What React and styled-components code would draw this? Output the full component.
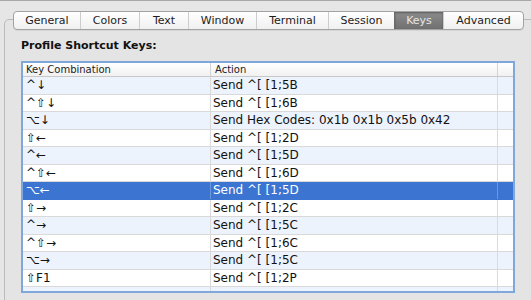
import styled, { createGlobalStyle } from "styled-components";

const GlobalStyle = createGlobalStyle`
  html, body {
    margin: 0;
    padding: 0;
  }
  body {
    background: #e6e6e6;
    font-family: "DejaVu Sans", "Liberation Sans", sans-serif;
    color: #111;
  }
`;

const Window = styled.div`
  width: 531px;
  height: 300px;
  overflow: hidden;
  box-sizing: border-box;
  background: #e6e6e6;
  border-top: 1px solid #a8a8a8;
  padding: 18px 0 0 4px;
`;

const Panel = styled.div`
  height: 320px;
  margin-right: -10px;
  border: 1px solid #bababa;
  border-radius: 5px 0 0 0;
  background: #e4e4e4;
  padding-left: 8px;
`;

const TabBar = styled.div`
  display: flex;
  width: fit-content;
  margin-top: -9px;
  border: 1px solid #a2a2a2;
  border-radius: 4px;
  overflow: hidden;
  background: linear-gradient(#ffffff, #f0f0f0);
  box-shadow: 0 1px 0 rgba(0, 0, 0, 0.06);
`;

const Tab = styled.div`
  box-sizing: border-box;
  width: ${(p) => p.$w}px;
  height: 17px;
  display: flex;
  align-items: center;
  justify-content: center;
  font-size: 11px;
  color: ${(p) => (p.$active ? "#e6e6e6" : "#1c1c1c")};
  border-left: ${(p) => (p.$first ? "none" : "1px solid #cdcdcd")};
  background: ${(p) =>
    p.$active ? "linear-gradient(#8c8c8c, #707070)" : "transparent"};
  ${(p) => p.$active && "border-left-color: #6a6a6a; box-shadow: inset 0 1px 2px rgba(0,0,0,0.35);"}
`;

const Body = styled.div`
  padding-left: 8px;
`;

const Heading = styled.div`
  margin-top: 9px;
  font-size: 11px;
  line-height: 14px;
  font-weight: bold;
  color: #111;
`;

const Table = styled.div`
  margin-top: 8px;
  width: 494px;
  height: 232px;
  box-sizing: border-box;
  border: 2px solid #7fa7db;
  background: #fff;
  overflow: hidden;
`;

const Header = styled.div`
  display: grid;
  grid-template-columns: 188px 287px 1fr;
  height: 14px;
  box-sizing: border-box;
  border-bottom: 1px solid #c8c8c8;
  background: linear-gradient(#ffffff, #f1f1f1);
  font-size: 10px;
  line-height: 13px;
  color: #222;
`;

const HeadCell = styled.div`
  padding-left: ${(p) => p.$pad}px;
  border-right: ${(p) => (p.$last ? "none" : "1px solid #d4d4d4")};
  white-space: nowrap;
`;

const Row = styled.div`
  display: grid;
  grid-template-columns: 188px 287px 1fr;
  height: 17.5px;
  box-sizing: border-box;
  border-bottom: 1px solid ${(p) => (p.$selected ? "#3b74d1" : "#d9d9d9")};
  background: ${(p) =>
    p.$selected ? "#3b74d1" : p.$odd ? "#edf3fd" : "#ffffff"};
  color: ${(p) => (p.$selected ? "#ffffff" : "#111")};
  font-size: 12px;
  line-height: 16px;
`;

const Cell = styled.div`
  padding-left: ${(p) => p.$pad}px;
  border-right: ${(p) =>
    p.$last ? "none" : p.$selected ? "1px solid #6b97df" : "1px solid #dadada"};
  white-space: nowrap;
  overflow: hidden;
`;

const tabs = [
  { label: "General", w: 66 },
  { label: "Colors", w: 59 },
  { label: "Text", w: 49 },
  { label: "Window", w: 68 },
  { label: "Terminal", w: 72 },
  { label: "Session", w: 66 },
  { label: "Keys", w: 49, active: true },
  { label: "Advanced", w: 80 },
];

const rows = [
  ["^↓", "Send ^[ [1;5B"],
  ["^⇧↓", "Send ^[ [1;6B"],
  ["⌥↓", "Send Hex Codes: 0x1b 0x1b 0x5b 0x42"],
  ["⇧←", "Send ^[ [1;2D"],
  ["^←", "Send ^[ [1;5D"],
  ["^⇧←", "Send ^[ [1;6D"],
  ["⌥←", "Send ^[ [1;5D", true],
  ["⇧→", "Send ^[ [1;2C"],
  ["^→", "Send ^[ [1;5C"],
  ["^⇧→", "Send ^[ [1;6C"],
  ["⌥→", "Send ^[ [1;5C"],
  ["⇧F1", "Send ^[ [1;2P"],
  ["", ""],
];

export default function App() {
  return (
    <>
      <GlobalStyle />
      <Window>
        <Panel>
          <TabBar>
            {tabs.map((t, i) => (
              <Tab key={t.label} $w={t.w} $first={i === 0} $active={t.active}>
                {t.label}
              </Tab>
            ))}
          </TabBar>
          <Body>
            <Heading>Profile Shortcut Keys:</Heading>
            <Table>
              <Header>
                <HeadCell $pad={3}>Key Combination</HeadCell>
                <HeadCell $pad={4}>Action</HeadCell>
                <HeadCell $last />
              </Header>
              {rows.map(([key, action, sel], i) => (
                <Row key={i} $odd={i % 2 === 0} $selected={sel}>
                  <Cell $pad={3} $selected={sel}>{key}</Cell>
                  <Cell $pad={2} $selected={sel}>{action}</Cell>
                  <Cell $last />
                </Row>
              ))}
            </Table>
          </Body>
        </Panel>
      </Window>
    </>
  );
}
